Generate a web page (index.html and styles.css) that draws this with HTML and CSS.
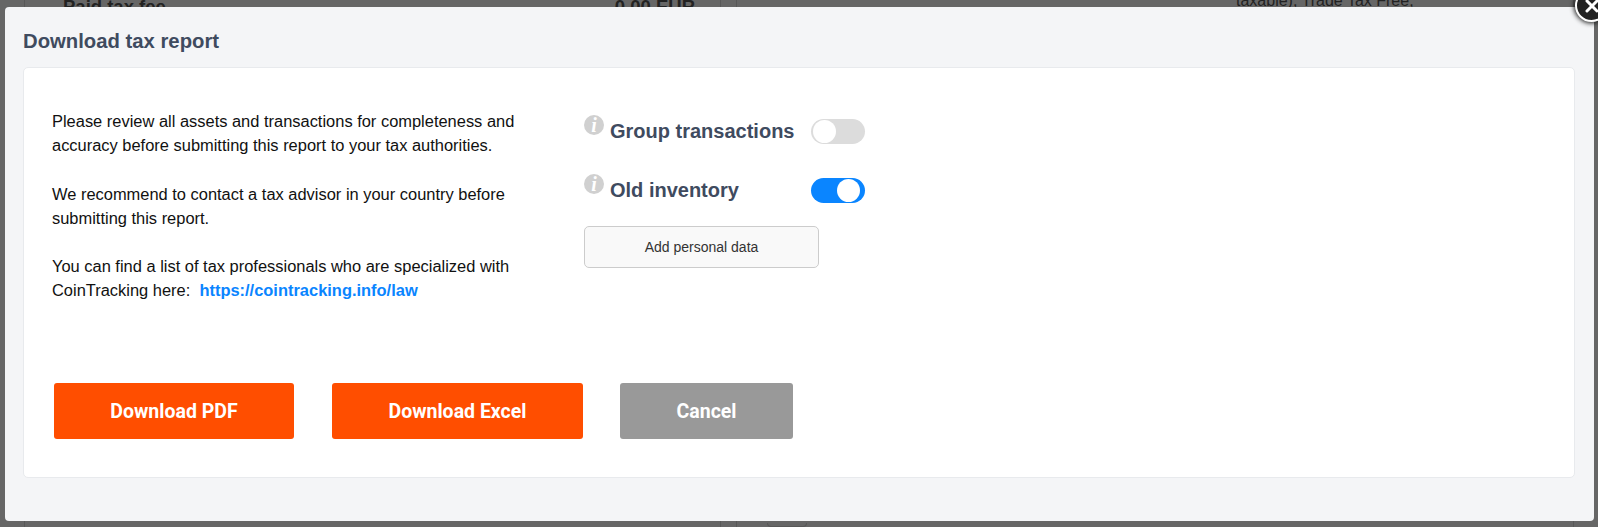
FILE: index.html
```html
<!DOCTYPE html>
<html lang="en">
<head>
  <meta charset="UTF-8">
  <meta name="viewport" content="width=device-width, initial-scale=1.0">
  <title>Download tax report</title>
  <link rel="stylesheet" href="styles.css">
</head>
<body>
  <div class="page">
    <div class="panel panel-left">
      <div class="fee-row">
        <span>Paid tax fee</span>
        <span>0.00 EUR</span>
      </div>
    </div>
    <div class="panel panel-right">
      <div class="tax-note">taxable), Trade Tax Free,</div>
      <div class="tab-stub"></div>
    </div>
  </div>

  <div class="modal">
    <button class="close" aria-label="Close">
      <svg viewBox="0 0 14 14" width="14" height="14">
        <path d="M2 2 12 12M12 2 2 12" stroke="#fff" stroke-width="3" stroke-linecap="round"/>
      </svg>
    </button>
    <h2 class="modal-title">Download tax report</h2>
    <div class="card">
      <div class="card-top">
        <div class="intro">
          <p>Please review all assets and transactions for completeness and accuracy before submitting this report to your tax authorities.</p>
          <p>We recommend to contact a tax advisor in your country before submitting this report.</p>
          <p>You can find a list of tax professionals who are specialized with CoinTracking here:&nbsp; <a href="#">https://cointracking.info/law</a></p>
        </div>
        <div class="options">
          <div class="option">
            <span class="info">i</span>
            <span class="option-label">Group transactions</span>
            <span class="toggle"><span class="knob"></span></span>
          </div>
          <div class="option">
            <span class="info">i</span>
            <span class="option-label">Old inventory</span>
            <span class="toggle on"><span class="knob"></span></span>
          </div>
          <button class="btn-personal">Add personal data</button>
        </div>
      </div>
      <div class="actions">
        <button class="btn btn-pdf">Download PDF</button>
        <button class="btn btn-excel">Download Excel</button>
        <button class="btn btn-cancel">Cancel</button>
      </div>
    </div>
  </div>
</body>
</html>
```

FILE: styles.css
```css
* {
  margin: 0;
  padding: 0;
  box-sizing: border-box;
}

html, body {
  height: 527px;
  overflow: hidden;
}

body {
  background-color: #666;
  font-family: 'Liberation Sans', Arial, sans-serif;
  position: relative;
}

.page {
  height: 527px;
  padding: 0 24px;
  display: flex;
  gap: 15px;
}

.panel {
  flex: 1;
  border-left: 1px solid #585858;
  border-right: 1px solid #585858;
  color: #222;
}

.panel-left {
  flex: none;
  width: 697px;
}

.fee-row {
  display: flex;
  justify-content: space-between;
  padding: 0 25px 0 38px;
  margin-top: -5px;
  font-size: 18.5px;
  font-weight: bold;
  line-height: 24px;
}

.panel-right {
  position: relative;
}

.tax-note {
  margin-top: -9px;
  padding-left: 499px;
  font-size: 16px;
  line-height: 20px;
}

.tab-stub {
  position: absolute;
  left: 30px;
  bottom: 0;
  width: 40px;
  height: 4px;
  border: 1px solid #585858;
  border-top: none;
  border-radius: 0 0 5px 5px;
}

.modal {
  position: absolute;
  left: 5px;
  top: 7px;
  width: 1589px;
  height: 514px;
  padding: 0 19px 0 18px;
  background-color: #f4f5f7;
  border-radius: 4px;
}

.close {
  position: absolute;
  right: -14px;
  top: -18px;
  width: 33px;
  height: 33px;
  border: 2px solid #fff;
  border-radius: 50%;
  background-color: #222;
  box-shadow: 0 0 5px 1px #111;
  display: flex;
  align-items: center;
  justify-content: center;
}

.modal-title {
  font-size: 20.3px;
  font-weight: bold;
  line-height: 24px;
  color: #3f4b5f;
  padding-top: 22px;
  height: 60px;
}

.card {
  height: 411px;
  padding: 0 28px;
  background-color: #fff;
  border: 1px solid #e8eaed;
  border-radius: 5px;
}

.card-top {
  height: 315px;
  display: flex;
}

.intro {
  width: 532px;
  padding-top: 41px;
  font-size: 16.45px;
  line-height: 24.2px;
  color: #111;
}

.intro p {
  width: 480px;
  margin-bottom: 24.2px;
}

.intro a {
  color: #0a85ff;
  font-weight: bold;
  text-decoration: none;
}

.options {
  width: 281px;
  padding-top: 51px;
}

.option {
  position: relative;
  height: 59px;
  display: flex;
  align-items: flex-start;
}

.info {
  width: 20px;
  height: 20px;
  margin-top: -4px;
  border-radius: 50%;
  background-color: #d0d0d0;
  color: #fff;
  font-family: 'Liberation Serif', serif;
  font-size: 20px;
  font-weight: bold;
  font-style: italic;
  line-height: 20px;
  text-align: center;
}

.option-label {
  margin-left: 6px;
  flex: 1;
  font-size: 20px;
  font-weight: bold;
  line-height: 24px;
  color: #3f4b5f;
}

.toggle {
  width: 54px;
  height: 25px;
  padding: 1px 2px;
  border-radius: 13px;
  background-color: #dcdcdc;
  display: flex;
}

.toggle.on {
  padding-right: 5px;
  background-color: #0a85ff;
  justify-content: flex-end;
}

.knob {
  width: 23px;
  height: 23px;
  border-radius: 50%;
  background-color: #fff;
}

.btn-personal {
  display: block;
  width: 235px;
  height: 42px;
  margin-top: -11px;
  background-color: #f9f9f9;
  border: 1px solid #ccc;
  border-radius: 5px;
  font-family: 'Liberation Sans', Arial, sans-serif;
  font-size: 14px;
  color: #333;
}

.actions {
  display: flex;
  padding-left: 2px;
  gap: 38px;
}

.btn {
  height: 56px;
  border: none;
  border-radius: 3px;
  font-family: Roboto, sans-serif;
  font-size: 19.5px;
  font-weight: bold;
  color: #fff;
}

.btn-pdf {
  width: 240px;
  background-color: #ff4e00;
}

.btn-excel {
  width: 251px;
  background-color: #ff4e00;
}

.btn-cancel {
  width: 173px;
  margin-left: -1px;
  background-color: #999;
}
```
